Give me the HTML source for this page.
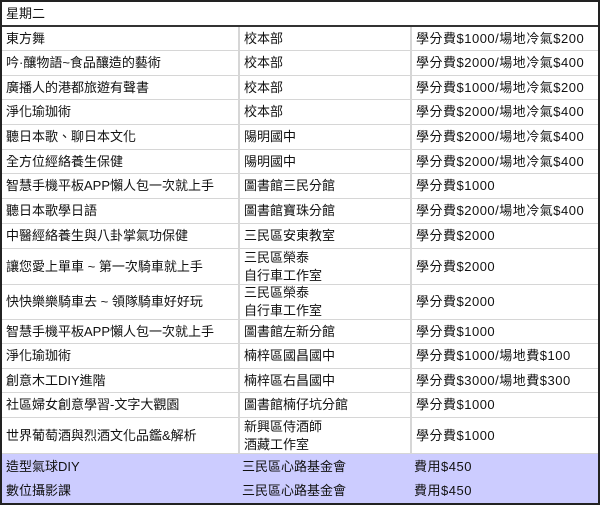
<!DOCTYPE html>
<html><head><meta charset="utf-8"><style>
html,body{margin:0;padding:0;background:#fff;}
.t{position:absolute;left:0;top:0;width:596px;height:501px;border:2px solid #222;overflow:hidden;font-family:"Liberation Sans","Noto Sans CJK TC",sans-serif;font-size:13px;color:#111;}
.r{position:absolute;left:0;width:596px;border-bottom:1px solid #d6d6d6;box-sizing:border-box;}
.c{position:absolute;top:0;bottom:0;display:flex;align-items:center;padding-left:4px;line-height:18px;box-sizing:border-box;}
.c1{left:0;width:236px;}
.c2{left:236px;width:172px;border-left:2px solid #d6d6d6;}
.c3{left:408px;width:188px;border-left:2px solid #d6d6d6;letter-spacing:0.5px;}
.h{border-bottom:2px solid #333;}
.p{background:#ccccff;border-bottom:none;}
.p .c2,.p .c3{border-left:none;}
</style></head><body><div class="t">
<div class="r h" style="top:0;height:25px"><div class="c c1" style="width:596px">星期二</div></div>
<div class="r" style="top:25px;height:24px"><div class="c c1">東方舞</div><div class="c c2">校本部</div><div class="c c3">學分費$1000/場地冷氣$200</div></div>
<div class="r" style="top:49px;height:25px"><div class="c c1">吟·釀物語~食品釀造的藝術</div><div class="c c2">校本部</div><div class="c c3">學分費$2000/場地冷氣$400</div></div>
<div class="r" style="top:74px;height:24px"><div class="c c1">廣播人的港都旅遊有聲書</div><div class="c c2">校本部</div><div class="c c3">學分費$1000/場地冷氣$200</div></div>
<div class="r" style="top:98px;height:25px"><div class="c c1">淨化瑜珈術</div><div class="c c2">校本部</div><div class="c c3">學分費$2000/場地冷氣$400</div></div>
<div class="r" style="top:123px;height:25px"><div class="c c1">聽日本歌、聊日本文化</div><div class="c c2">陽明國中</div><div class="c c3">學分費$2000/場地冷氣$400</div></div>
<div class="r" style="top:148px;height:24px"><div class="c c1">全方位經絡養生保健</div><div class="c c2">陽明國中</div><div class="c c3">學分費$2000/場地冷氣$400</div></div>
<div class="r" style="top:172px;height:25px"><div class="c c1">智慧手機平板APP懶人包一次就上手</div><div class="c c2">圖書館三民分館</div><div class="c c3">學分費$1000</div></div>
<div class="r" style="top:197px;height:25px"><div class="c c1">聽日本歌學日語</div><div class="c c2">圖書館寶珠分館</div><div class="c c3">學分費$2000/場地冷氣$400</div></div>
<div class="r" style="top:222px;height:25px"><div class="c c1">中醫經絡養生與八卦掌氣功保健</div><div class="c c2">三民區安東教室</div><div class="c c3">學分費$2000</div></div>
<div class="r" style="top:247px;height:36px"><div class="c c1">讓您愛上單車 ~ 第一次騎車就上手</div><div class="c c2">三民區榮泰<br>自行車工作室</div><div class="c c3">學分費$2000</div></div>
<div class="r" style="top:283px;height:35px"><div class="c c1">快快樂樂騎車去 ~ 領隊騎車好好玩</div><div class="c c2">三民區榮泰<br>自行車工作室</div><div class="c c3">學分費$2000</div></div>
<div class="r" style="top:318px;height:24px"><div class="c c1">智慧手機平板APP懶人包一次就上手</div><div class="c c2">圖書館左新分館</div><div class="c c3">學分費$1000</div></div>
<div class="r" style="top:342px;height:25px"><div class="c c1">淨化瑜珈術</div><div class="c c2">楠梓區國昌國中</div><div class="c c3">學分費$1000/場地費$100</div></div>
<div class="r" style="top:367px;height:24px"><div class="c c1">創意木工DIY進階</div><div class="c c2">楠梓區右昌國中</div><div class="c c3">學分費$3000/場地費$300</div></div>
<div class="r" style="top:391px;height:25px"><div class="c c1">社區婦女創意學習-文字大觀園</div><div class="c c2">圖書館楠仔坑分館</div><div class="c c3">學分費$1000</div></div>
<div class="r" style="top:416px;height:36px"><div class="c c1">世界葡萄酒與烈酒文化品鑑&amp;解析</div><div class="c c2">新興區侍酒師<br>酒藏工作室</div><div class="c c3">學分費$1000</div></div>
<div class="r p" style="top:452px;height:25px"><div class="c c1">造型氣球DIY</div><div class="c c2">三民區心路基金會</div><div class="c c3">費用$450</div></div>
<div class="r p" style="top:477px;height:24px"><div class="c c1">數位攝影課</div><div class="c c2">三民區心路基金會</div><div class="c c3">費用$450</div></div>
</div></body></html>
